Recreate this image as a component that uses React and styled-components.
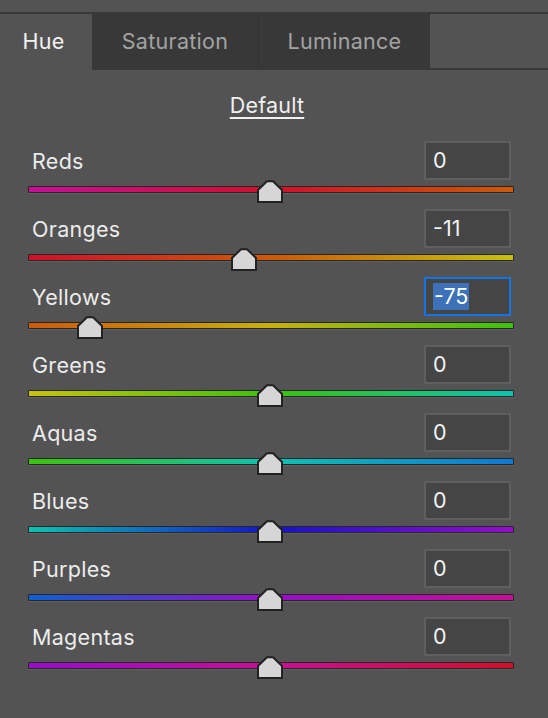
import React, { useState } from 'react'
import styled, { createGlobalStyle } from 'styled-components'

const GlobalStyle = createGlobalStyle`
  html, body {
    margin: 0;
    padding: 0;
    background: #535353;
  }
  body {
    font-family: Inter, 'Noto Sans', 'Liberation Sans', sans-serif;
    -webkit-font-smoothing: antialiased;
  }
`

const Panel = styled.div`
  width: 548px;
  height: 718px;
  background: #535353;
  padding-top: 12px;
  box-sizing: border-box;
  overflow: hidden;
`

const TabBar = styled.div`
  display: flex;
  height: 58px;
  border-top: 2px solid #393939;
  box-sizing: border-box;
`

const Tab = styled.div`
  display: flex;
  align-items: center;
  justify-content: center;
  width: ${(p) => p.w}px;
  padding-right: ${(p) => p.pr || 0}px;
  box-sizing: border-box;
  font-size: 21.5px;
  letter-spacing: 0.3px;
  color: ${(p) => (p.active ? '#f2f2f2' : '#a3a3a3')};
  background: ${(p) => (p.active ? '#535353' : '#383838')};
  border-left: ${(p) => (p.sep ? '1px solid #333333' : 'none')};
  padding-bottom: 2px;
`

const TabFill = styled.div`
  flex: 1;
  border-bottom: 2px solid #393939;
`

const DefaultRow = styled.div`
  display: flex;
  justify-content: center;
  padding: 22px 14px 0 0;
  height: 48px;
  box-sizing: border-box;
`

const DefaultLink = styled.span`
  font-size: 21.5px;
  color: #f0f0f0;
  text-decoration: underline;
  text-underline-offset: 4px;
  text-decoration-thickness: 2px;
  letter-spacing: 0.2px;
`

const Rows = styled.div`
  display: flex;
  flex-direction: column;
  padding: 22px 34px 0 28px;
`

const Row = styled.div`
  display: flex;
  flex-direction: column;
  height: 68px;
`

const Header = styled.div`
  display: flex;
  align-items: center;
  justify-content: space-between;
  height: 40px;
  padding-left: 4px;
  padding-right: 3px;
`

const Label = styled.span`
  font-size: 21.5px;
  color: #ececec;
  letter-spacing: 0.3px;
  padding-top: 2px;
`

const ValueBox = styled.div`
  width: 87px;
  height: 39px;
  box-sizing: border-box;
  background: #454545;
  border: 2px solid ${(p) => (p.focused ? '#1473e6' : '#5f5f5f')};
  display: flex;
  align-items: center;
  padding-left: 7px;
  font-size: 21.5px;
  color: #f2f2f2;
`

const Selected = styled.span`
  background: #3d72b8;
  color: #ffffff;
  padding: 0 1px;
  line-height: 27px;
`

const SliderZone = styled.div`
  position: relative;
  height: 28px;
`

const Track = styled.div`
  position: absolute;
  left: 0;
  right: 0;
  top: 6px;
  height: 7px;
  box-sizing: border-box;
  border: 1px solid #262626;
  border-radius: 1px;
  background: ${(p) => p.gradient};
  box-shadow: 0 1px 0 #606060;
`

const Thumb = styled.svg`
  position: absolute;
  top: 0;
  width: 26px;
  height: 23px;
  margin-left: -13px;
`

const rows = [
  { name: 'Reds', value: 0, colors: ['#c80f98', '#d20f2a', '#cc5a08'] },
  { name: 'Oranges', value: -11, colors: ['#d20f2a', '#cc5a08', '#c8c20e'] },
  { name: 'Yellows', value: -75, colors: ['#cc5a08', '#c8b00e', '#3cc20e'], focused: true },
  { name: 'Greens', value: 0, colors: ['#c8c20e', '#3cc20e', '#0ec2b0'] },
  { name: 'Aquas', value: 0, colors: ['#3cc20e', '#0ec2b0', '#0e78d4'] },
  { name: 'Blues', value: 0, colors: ['#0ec2b0', '#1414c8', '#960ec8'] },
  { name: 'Purples', value: 0, colors: ['#0e60d4', '#960ec8', '#c80f98'] },
  { name: 'Magentas', value: 0, colors: ['#960ec8', '#c80f98', '#d20f2a'] }
]

const SliderThumb = ({ left }) => (
  <Thumb style={{ left }} viewBox='0 0 26 23'>
    <path
      d='M1 10 L10 1.2 L16 1.2 L25 10 L25 22 L1 22 Z'
      fill='#d6d6d6'
      stroke='#222222'
      strokeWidth='2'
      strokeLinejoin='miter'
    />
  </Thumb>
)

const HueRow = ({ row }) => {
  const left = 242 + row.value * 2.4
  const gradient = `linear-gradient(to right, ${row.colors[0]}, ${row.colors[1]} 50%, ${row.colors[2]})`
  return (
    <Row>
      <Header>
        <Label>{row.name}</Label>
        <ValueBox focused={row.focused}>
          {row.focused ? <Selected>{row.value}</Selected> : row.value}
        </ValueBox>
      </Header>
      <SliderZone>
        <Track gradient={gradient} />
        <SliderThumb left={left} />
      </SliderZone>
    </Row>
  )
}

export default function App() {
  const [tab] = useState('Hue')
  return (
    <>
      <GlobalStyle />
      <Panel>
        <TabBar>
          <Tab w={92} pr={5} active={tab === 'Hue'}>Hue</Tab>
          <Tab w={166}>Saturation</Tab>
          <Tab w={172} sep>Luminance</Tab>
          <TabFill />
        </TabBar>
        <DefaultRow>
          <DefaultLink>Default</DefaultLink>
        </DefaultRow>
        <Rows>
          {rows.map((r) => (
            <HueRow key={r.name} row={r} />
          ))}
        </Rows>
      </Panel>
    </>
  )
}
